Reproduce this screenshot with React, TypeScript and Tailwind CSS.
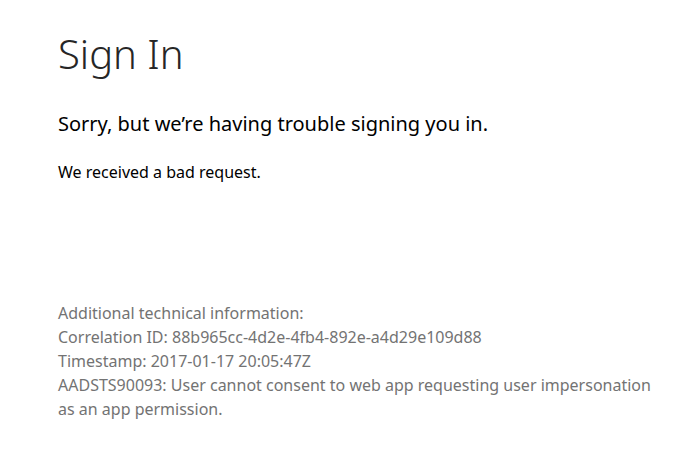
export default function App() {
  return (
    <div className="min-h-screen w-full bg-white pl-[58px] pr-6 pt-[26px] font-['Noto_Sans',sans-serif]">
      <h1 className="text-[40px] font-light leading-[56px] text-[#262626]">Sign In</h1>
      <p className="mt-[28px] text-[20px] leading-[28px] text-black">
        Sorry, but we’re having trouble signing you in.
      </p>
      <p className="mt-[23px] text-[16px] leading-[22px] text-black">We received a bad request.</p>

      <div className="mt-[118px] text-[16px] leading-[24px] text-[#737373]">
        <p>Additional technical information:</p>
        <p>Correlation ID: 88b965cc-4d2e-4fb4-892e-a4d29e109d88</p>
        <p>Timestamp: 2017-01-17 20:05:47Z</p>
        <p>
          AADSTS90093: User cannot consent to web app requesting user impersonation
          <br />
          as an app permission.
        </p>
      </div>
    </div>
  );
}
